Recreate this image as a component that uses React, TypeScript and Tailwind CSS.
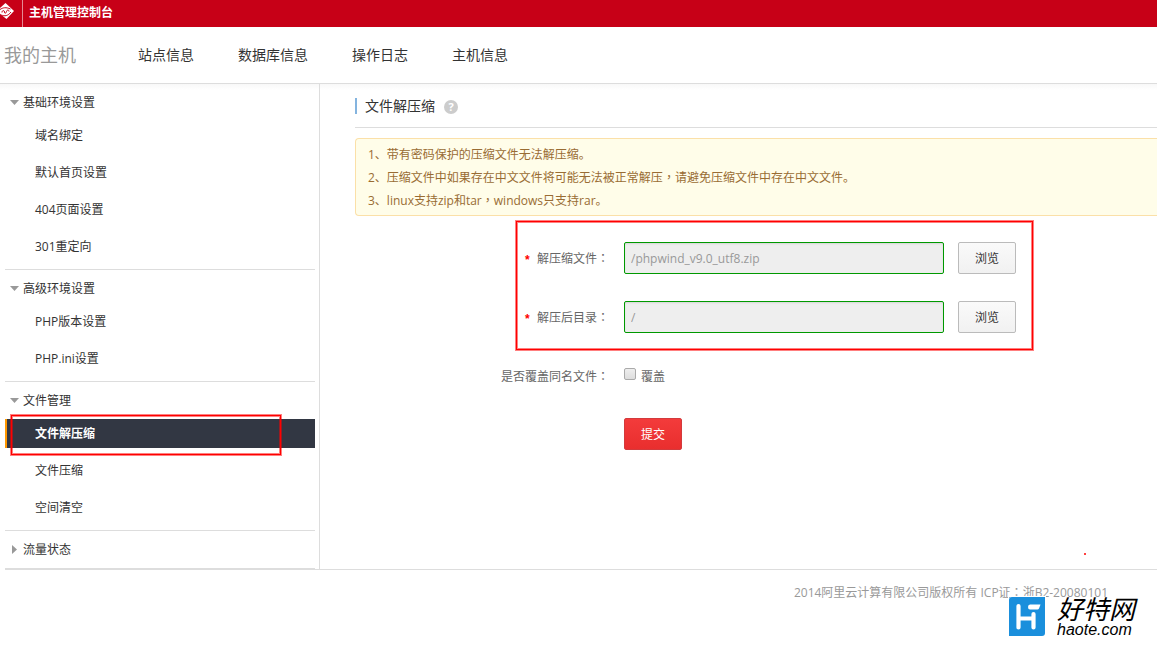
import React, { useState } from "react";

const navLinks = ["站点信息", "数据库信息", "操作日志", "主机信息"];

const menuGroups = [
  { title: "基础环境设置", open: true, items: ["域名绑定", "默认首页设置", "404页面设置", "301重定向"] },
  { title: "高级环境设置", open: true, items: ["PHP版本设置", "PHP.ini设置"] },
  { title: "文件管理", open: true, items: ["文件解压缩", "文件压缩", "空间清空"] },
  { title: "流量状态", open: false, items: [] },
];

const notices = [
  "1、带有密码保护的压缩文件无法解压缩。",
  "2、压缩文件中如果存在中文文件将可能无法被正常解压，请避免压缩文件中存在中文文件。",
  "3、linux支持zip和tar，windows只支持rar。",
];

// Commas and colons sit in the middle of their square, as in the TC face
function Punctuated({ text }: { text: string }) {
  return (
    <span>
      {text.split(/([，：])/).map((part, i) =>
        part === "，" || part === "：" ? (
          <span key={i} lang="zh-Hant" className="font-['Noto_Sans_CJK_TC',sans-serif] leading-none">{part}</span>
        ) : (
          part
        )
      )}
    </span>
  );
}

function Arrow({ open }: { open: boolean }) {
  return (
    <svg width="9" height="9" viewBox="0 0 9 9" fill="#999" className="shrink-0" aria-hidden="true">
      {open ? <path d="M0 2h9L4.500 7z" /> : <path d="M2 0v9l5-4.500z" />}
    </svg>
  );
}

// --- Red top bar ---
function TopBar() {
  return (
    <header className="flex h-[27px] bg-[#c70017] text-white">
      <div className="w-[22px] pt-[3px]">
        <svg width="15" height="17" viewBox="0 0 15 17" aria-hidden="true">
          <path d="M5.500 0L14 8 6.500 16 -1 10V6z" fill="#fff" />
          <path
            d="M0 6.500C3 4.500 6 4 10.500 6M2 9.500c0-2.500 2.500-2.500 2.500-.5S6 10.500 6.500 8.500s2.500-2 2.500 0M1.500 12c3 1.500 6.500 1 9.500-3"
            fill="none"
            stroke="#c70017"
            strokeWidth="1"
          />
        </svg>
      </div>
      <div className="flex flex-1 items-center border-l border-[#e58a94] pb-0.5 pl-1.5 text-xs font-bold">主机管理控制台</div>
    </header>
  );
}

// --- Left menu ---
function Sidebar() {
  return (
    <aside className="w-80 shrink-0 border-r border-[#ddd] pr-1 pl-[5px]">
      {menuGroups.map((group) => (
        <section key={group.title} className="border-b border-[#ddd]">
          <h3 className="flex h-[37px] items-center gap-1 pl-[5px]">
            <Arrow open={group.open} />
            {group.title}
          </h3>
          {group.items.map((item) =>
            item === "文件解压缩" ? (
              <a key={item} href="#" className="relative mb-2 flex h-[29px] items-center border-l-2 border-[#ff9800] bg-[#323743] pl-7 font-bold text-white">
                {item}
                <span className="absolute -top-1 left-1 h-10 w-[270px] border border-[#f00] shadow-[0_0_0_1px_#ff000080,inset_0_0_0_1px_#ff000080]" />
              </a>
            ) : (
              <a key={item} href="#" className="mb-2 flex h-[29px] items-center pl-[30px]">
                {item}
              </a>
            )
          )}
        </section>
      ))}
    </aside>
  );
}

function PathRow({ id, label, value }: { id: string; label: string; value: string }) {
  return (
    <div className="flex h-8 items-center">
      <label htmlFor={id} className="mr-[15px] flex w-[254px] items-center justify-end gap-1.5 pt-0.5">
        <span className="pt-1 font-['Liberation_Mono'] text-xs leading-none font-bold text-[#f00]">*</span>
        <Punctuated text={label} />
      </label>
      <input
        id={id}
        type="text"
        readOnly
        value={value}
        className="h-8 w-80 rounded-xs border border-[#090] bg-[#eee] px-1.5 text-[#999] shadow-[inset_0_1px_2px_#0000001a] outline-none"
      />
      <button type="button" className="ml-3.5 h-8 w-[58px] rounded-xs border border-[#bbb] bg-linear-to-b from-[#fafafa] to-[#f1f1f1] pt-0.5 text-[#333]">
        浏览
      </button>
    </div>
  );
}

export default function App() {
  const [overwrite, setOverwrite] = useState(false);

  return (
    <div className="overflow-x-hidden bg-white font-['Open_Sans','Noto_Sans_CJK_SC',sans-serif] text-xs text-[#333]">
      <TopBar />

      <div className="flex h-[57px] items-center border-b border-[#ddd] pl-1">
        <h1 className="mr-[62px] text-lg text-[#999]">我的主机</h1>
        <nav className="flex gap-11 text-sm">
          {navLinks.map((link) => (
            <a key={link} href="#">{link}</a>
          ))}
        </nav>
      </div>

      <div className="flex bg-linear-to-b from-[#f8f8f8] to-white to-[6px]">
        <Sidebar />

        <main className="relative min-w-0 flex-1 pl-[35px]">
          <div className="flex h-11 items-center border-b border-[#ddd]">
            <h2 className="border-l-2 border-[#84b4df] pl-2 text-sm leading-4">文件解压缩</h2>
            <span className="mt-0.5 ml-[9px] flex size-3.5 items-center justify-center rounded-full bg-[#ccc] text-[11px] leading-none font-bold text-white">?</span>
          </div>

          {/* Notice box */}
          <ol className="mt-2.5 rounded-l-sm border border-r-0 border-[#fbe0a8] bg-[#fffde9] pt-1 pb-[3px] pl-3 leading-[23px] text-[#996c33]">
            {notices.map((notice) => (
              <li key={notice}><Punctuated text={notice} /></li>
            ))}
          </ol>

          <form className="pt-[26px] text-[#666]" onSubmit={(e) => e.preventDefault()}>
            <div className="relative flex flex-col gap-[27px]">
              <PathRow id="zip-file" label="解压缩文件：" value="/phpwind_v9.0_utf8.zip" />
              <PathRow id="target-dir" label="解压后目录：" value="/" />
              <span className="pointer-events-none absolute -top-[21px] -bottom-[17px] left-[161px] w-[517px] border border-[#f00] shadow-[0_0_0_1px_#ff000080,inset_0_0_0_1px_#ff000080]" />
            </div>

            <div className="mt-[27px] flex h-8 items-center pt-0.5">
              <span className="mr-[15px] w-[254px] text-right"><Punctuated text="是否覆盖同名文件：" /></span>
              <label className="flex items-center gap-[5px]">
                <input
                  type="checkbox"
                  checked={overwrite}
                  onChange={(e) => setOverwrite(e.target.checked)}
                  className="mb-1.5 size-3 appearance-none rounded-xs border border-[#aaa] bg-linear-to-b from-[#eee] to-[#ddd] checked:bg-[#888]"
                />
                覆盖
              </label>
            </div>

            <button type="submit" className="mt-[26px] ml-[269px] h-8 w-[58px] rounded-xs border border-[#d33a3c] bg-linear-to-b from-[#f33b3b] to-[#e92e2e] pt-0.5 text-white">
              提交
            </button>
          </form>

          <span className="absolute right-[71px] bottom-3.5 size-0.5 rounded-full bg-[#f00]" />
        </main>
      </div>

      <footer className="relative ml-[5px] h-20 border-t border-[#ddd] pt-[15px] pr-[49px] text-right text-[#999]">
        <p><Punctuated text="2014阿里云计算有限公司版权所有 ICP证：浙B2-20080101" /></p>

        {/* Site mark over the corner of the footer */}
        <div className="absolute top-[27px] right-5 flex gap-3 text-black">
          <svg width="36" height="39" viewBox="0 0 36 39" className="ring-1 ring-white" aria-hidden="true">
            <path d="M3 0h33v36q0 3-3 3H0V3q0-3 3-3z" fill="#1a8fdc" />
            <path d="M9.500 9v21.500M24.500 17v13.500M9.500 21.500h15" fill="none" stroke="#fff" strokeWidth="4.200" strokeLinecap="round" />
            <path d="M21 7.500h10.500l-1.500 4q-.5 1-1.500 1H21q-2 0-2-2.500t2-2.500z" fill="#fff" />
          </svg>
          <div className="w-20 text-left italic">
            <div className="text-[26px] leading-6 whitespace-nowrap">好特网</div>
            <div className="font-['Liberation_Sans',sans-serif] text-base leading-[18px]">haote.com</div>
          </div>
        </div>
      </footer>
    </div>
  );
}
